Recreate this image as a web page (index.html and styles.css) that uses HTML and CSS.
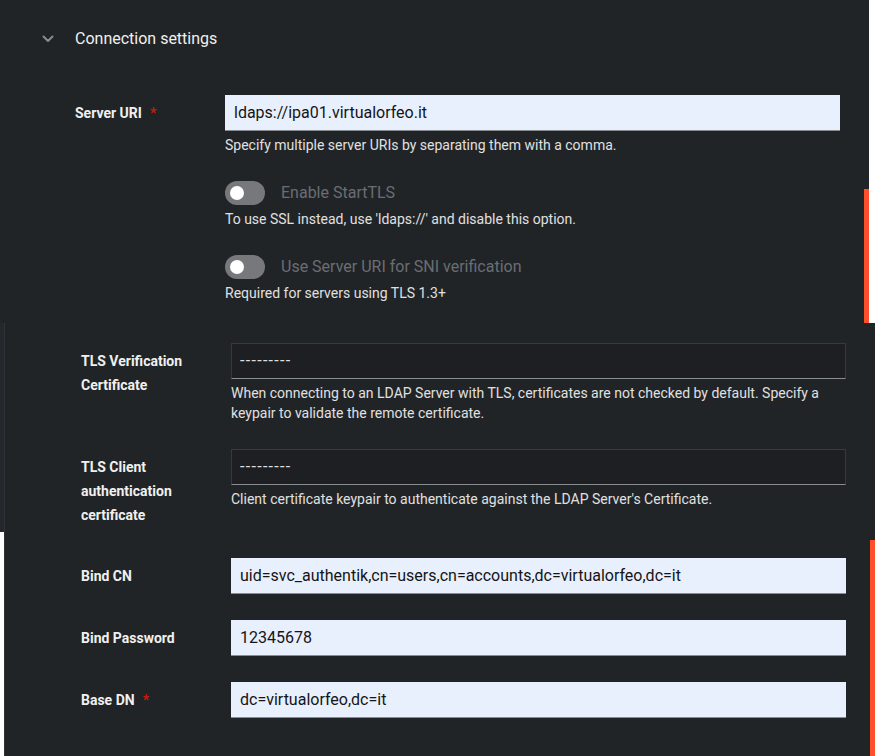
FILE: index.html
```html
<!DOCTYPE html>
<html lang="en">
<head>
<meta charset="utf-8">
<title>Connection settings</title>
<link rel="stylesheet" href="styles.css">
</head>
<body>
<div class="page">
  <section class="top">
    <div class="top-main">
      <div class="top-content">
        <div class="section-head">
          <svg class="chevron" width="12" height="8" viewBox="0 0 12 8" aria-hidden="true"><path d="M1.5 1.5 L6 6 L10.5 1.5" fill="none" stroke="#8a8d90" stroke-width="2" stroke-linecap="round" stroke-linejoin="round"/></svg>
          <span class="section-title">Connection settings</span>
        </div>
        <div class="form form-top">
          <div class="group">
            <div class="label">Server URI<span class="req">*</span></div>
            <div class="control">
              <input class="input" type="text" value="ldaps://ipa01.virtualorfeo.it" readonly>
              <div class="helper">Specify multiple server URIs by separating them with a comma.</div>
            </div>
          </div>
          <div class="group">
            <div class="label"></div>
            <div class="control">
              <div class="switch-row"><span class="switch"><span class="knob"></span></span><span class="switch-label">Enable StartTLS</span></div>
              <div class="helper">To use SSL instead, use 'ldaps://' and disable this option.</div>
            </div>
          </div>
          <div class="group">
            <div class="label"></div>
            <div class="control">
              <div class="switch-row"><span class="switch"><span class="knob"></span></span><span class="switch-label">Use Server URI for SNI verification</span></div>
              <div class="helper">Required for servers using TLS 1.3+</div>
            </div>
          </div>
        </div>
      </div>
      <div class="rail rail-top"><div class="thumb"></div></div>
    </div>
    <div class="edge"></div>
  </section>

  <section class="bottom">
    <div class="side"><div class="side-dark"></div></div>
    <div class="bottom-main">
      <div class="bottom-content">
        <div class="form">
          <div class="group">
            <div class="label">TLS Verification Certificate</div>
            <div class="control">
              <div class="select">---------</div>
              <div class="helper">When connecting to an LDAP Server with TLS, certificates are not checked by default. Specify a keypair to validate the remote certificate.</div>
            </div>
          </div>
          <div class="group">
            <div class="label">TLS Client authentication certificate</div>
            <div class="control">
              <div class="select">---------</div>
              <div class="helper">Client certificate keypair to authenticate against the LDAP Server's Certificate.</div>
            </div>
          </div>
          <div class="group">
            <div class="label">Bind CN</div>
            <div class="control">
              <input class="input" type="text" value="uid=svc_authentik,cn=users,cn=accounts,dc=virtualorfeo,dc=it" readonly>
            </div>
          </div>
          <div class="group">
            <div class="label">Bind Password</div>
            <div class="control">
              <input class="input" type="text" value="12345678" readonly>
            </div>
          </div>
          <div class="group">
            <div class="label">Base DN<span class="req">*</span></div>
            <div class="control">
              <input class="input" type="text" value="dc=virtualorfeo,dc=it" readonly>
            </div>
          </div>
        </div>
      </div>
      <div class="rail rail-bottom"><div class="thumb"></div></div>
    </div>
  </section>
</div>
</body>
</html>
```

FILE: styles.css
```css
* { box-sizing: border-box; }

html, body {
  margin: 0;
  padding: 0;
  background: #ffffff;
}

body {
  font-family: Roboto, "Liberation Sans", sans-serif;
  color: #f0f0f0;
  width: 875px;
  height: 756px;
  overflow: hidden;
}

.page {
  display: flex;
  flex-direction: column;
  width: 875px;
}

/* ---------- top region ---------- */
.top {
  display: flex;
  height: 323px;
}

.top-main {
  flex: 0 0 869px;
  display: flex;
  background: #212427;
}

.top-content {
  flex: 1;
  padding: 27px 24px 0 75px;
}

.edge {
  flex: 1;
  background: #ffffff;
}

.rail {
  flex: 0 0 5px;
  display: flex;
  flex-direction: column;
}

.rail .thumb {
  flex: 1;
  background: #fe4f2d;
}

.rail-top .thumb { margin-top: 189px; }
.rail-bottom .thumb { margin-top: 217px; }

.section-head {
  position: relative;
  height: 24px;
  display: flex;
  align-items: center;
}

.chevron {
  position: absolute;
  left: -33px;
  top: 8px;
}

.section-title {
  font-size: 16px;
  line-height: 24px;
  color: #f0f0f0;
}

.form-top {
  margin-top: 44px;
  gap: 26.5px;
}

/* ---------- form ---------- */
.form {
  display: flex;
  flex-direction: column;
  gap: 26px;
}

.group {
  display: grid;
  grid-template-columns: 150px 615px;
}

.label {
  font-size: 14px;
  font-weight: 700;
  line-height: 24px;
  padding: 6px 24px 5px 0;
  color: #f0f0f0;
}

.req {
  color: #c9190b;
  margin-left: 8px;
  font-weight: 700;
}

.control {
  display: flex;
  flex-direction: column;
}

.input {
  display: block;
  width: 100%;
  height: 36px;
  margin: 0;
  border: none;
  border-bottom: 1px solid #8a8d90;
  border-radius: 0;
  background: #e8f0fe;
  color: #151515;
  font-family: inherit;
  font-size: 16px;
  padding: 0 9px;
  outline: none;
}

.select {
  height: 36px;
  border: 1px solid #36393d;
  border-bottom-color: #8a8d90;
  background: #1d1f22;
  color: #e0e0e0;
  font-size: 16px;
  line-height: 34px;
  letter-spacing: 1.3px;
  padding: 0 8px;
}

.helper {
  margin-top: 4px;
  font-size: 14px;
  line-height: 20px;
  color: #e0e0e0;
}

.switch-row {
  display: flex;
  align-items: center;
  height: 24px;
  gap: 16px;
}

.switch {
  width: 40px;
  height: 24px;
  border-radius: 12px;
  background: #76787b;
  display: flex;
  align-items: center;
  padding-left: 5px;
}

.knob {
  width: 14px;
  height: 14px;
  border-radius: 50%;
  background: #ffffff;
}

.switch-label {
  font-size: 16px;
  line-height: 24px;
  color: #6a6e73;
}

/* ---------- bottom region ---------- */
.bottom {
  display: flex;
  height: 433px;
}

.side {
  flex: 0 0 5px;
  display: flex;
  flex-direction: column;
  border-right: 1px solid #2f3236;
  background: #ffffff;
}

.side-dark {
  height: 209px;
  background: #24272b;
}

.bottom-main {
  flex: 1;
  display: flex;
  background: #212427;
}

.bottom-content {
  flex: 1;
  padding: 20px 24px 0 76px;
}
```
